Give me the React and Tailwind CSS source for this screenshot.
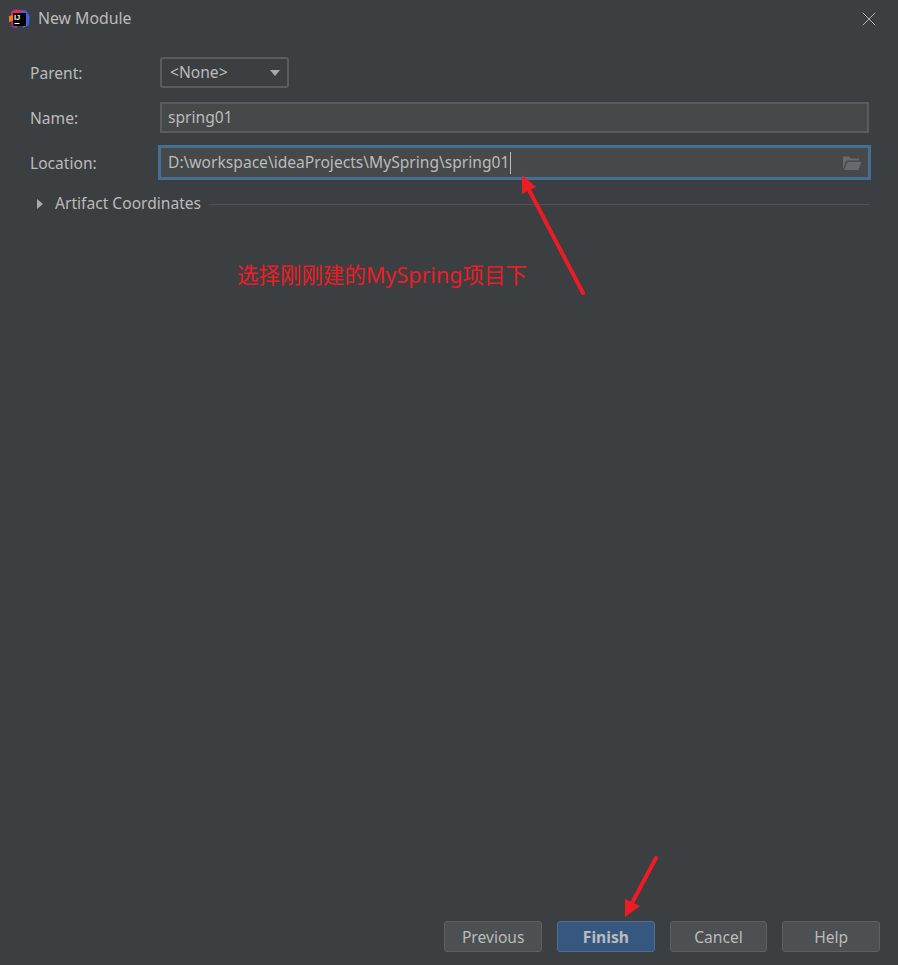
import { X } from "lucide-react";

const font = { fontFamily: '"Noto Sans", "Noto Sans CJK SC", sans-serif' };

function Logo() {
  return (
    <svg width="21" height="20" viewBox="0 0 21 20" className="shrink-0">
      <path d="M2 3 L6 0.5 L12 1 L12 9 L2 9 Z" fill="#e8265e" />
      <path d="M12 1 L17 1.5 L20.5 7 L20 16 L14 19 L11 10 Z" fill="#3d63e0" />
      <path d="M0 7 L5 6 L5 12 L0 13 Z" fill="#f97a12" />
      <path d="M2 12 L8 12 L8 19.5 L3 18 Z" fill="#b3279c" />
      <rect x="4" y="4" width="13" height="13" fill="#000" />
      <rect x="5.5" y="14" width="5" height="1" fill="#fff" />
      <text x="5" y="11" fontSize="7.5" fontWeight="700" fill="#fff" fontFamily="Liberation Sans">IJ</text>
    </svg>
  );
}

function Label({ children }) {
  return <div className="w-[130px] shrink-0 text-[15.6px] leading-5 text-[#bbbbbb]">{children}</div>;
}

function FooterButton({ children, primary }) {
  return (
    <button
      className={
        primary
          ? "h-[31px] w-[97.67px] rounded-[3px] border border-[#4c708c] bg-[#365880] pt-[3px] text-[15.6px] font-bold text-[#bbbbbb]"
          : "h-[31px] w-[97.67px] rounded-[3px] border border-[#5e6060] bg-[#4c5052] pt-[3px] text-[15.6px] text-[#bbbbbb]"
      }
    >
      {children}
    </button>
  );
}

export default function App() {
  return (
    <div className="relative flex h-[965px] w-[898px] flex-col overflow-hidden bg-[#3c3f41]" style={font}>
      <div className="flex h-[37px] items-center pl-[9px] pr-[17px]">
        <Logo />
        <span className="ml-[8px] text-[15.8px] text-[#bbbbbb]">New Module</span>
        <X className="ml-auto h-6 w-6 text-[#afb1b3]" strokeWidth={1} />
      </div>

      <div className="flex flex-col pl-[30px] pr-[29px] pt-5">
        <div className="flex items-center">
          <Label>Parent:</Label>
          <div className="flex h-[31px] w-[129px] items-center justify-between rounded-[3px] border-2 border-[#5a5d5f] pl-2 pr-[7px] text-[15.6px] text-[#bbbbbb]">
            <span>&lt;None&gt;</span>
            <span className="h-0 w-0 border-x-[5.5px] border-t-[6px] border-x-transparent border-t-[#a9a9a9]" />
          </div>
        </div>

        <div className="mt-[14px] flex items-center">
          <Label>Name:</Label>
          <div className="flex h-[31px] flex-1 items-center border-2 border-[#5a5d5f] bg-[#45494a] pl-[6px] text-[15.6px] text-[#bbbbbb]">
            spring01
          </div>
        </div>

        <div className="-mr-[2px] mt-3 flex items-center">
          <Label>Location:</Label>
          <div className="-ml-[2px] flex h-[35px] flex-1 items-center border-[3px] border-[#466d94] bg-[#45494a] pl-[7px] pr-[6px] text-[15.6px] text-[#bbbbbb]">
            <span>D:\workspace\ideaProjects\MySpring\spring01</span>
            <span className="ml-px h-[22px] w-px bg-[#bbbbbb]" />
            <svg width="20" height="16" viewBox="0 0 20 16" className="ml-auto">
              <path d="M1 14 V1.5 H7 L9 3.5 H17 V5.5 H4.5 L1 14 Z" fill="#676a6c" />
              <path d="M5.5 6.8 H19.5 L16.5 15 H1.8 Z" fill="#676a6c" />
            </svg>
          </div>
        </div>

        <div className="mt-3 flex items-center">
          <span className="ml-[7px] h-0 w-0 border-y-[5px] border-l-[6px] border-y-transparent border-l-[#a9a9a9]" />
          <span className="ml-3 text-[15.6px] text-[#bbbbbb]">Artifact Coordinates</span>
          <span className="ml-2 mt-[2px] h-px flex-1 bg-[#515151]" />
        </div>
      </div>

      <div className="mb-[13px] mt-auto flex justify-end gap-[15px] pr-[18px]">
        <FooterButton>Previous</FooterButton>
        <FooterButton primary>Finish</FooterButton>
        <FooterButton>Cancel</FooterButton>
        <FooterButton>Help</FooterButton>
      </div>

      {/* annotations pasted on top of the screenshot */}
      <div className="absolute left-[237px] top-[261px] text-[21.5px] leading-7 text-[#ed1c24]">
        选择刚刚建的MySpring项目下
      </div>
      <svg className="pointer-events-none absolute left-0 top-0" width="898" height="965">
        <path d="M583 293 L528 188" stroke="#ed1c24" strokeWidth="4" strokeLinecap="round" />
        <path d="M522 175 L522 194 L536 187 Z" fill="#ed1c24" />
        <path d="M656 858 L632 903" stroke="#ed1c24" strokeWidth="4" strokeLinecap="round" />
        <path d="M625 917 L625 899 L640 906 Z" fill="#ed1c24" />
      </svg>
    </div>
  );
}
